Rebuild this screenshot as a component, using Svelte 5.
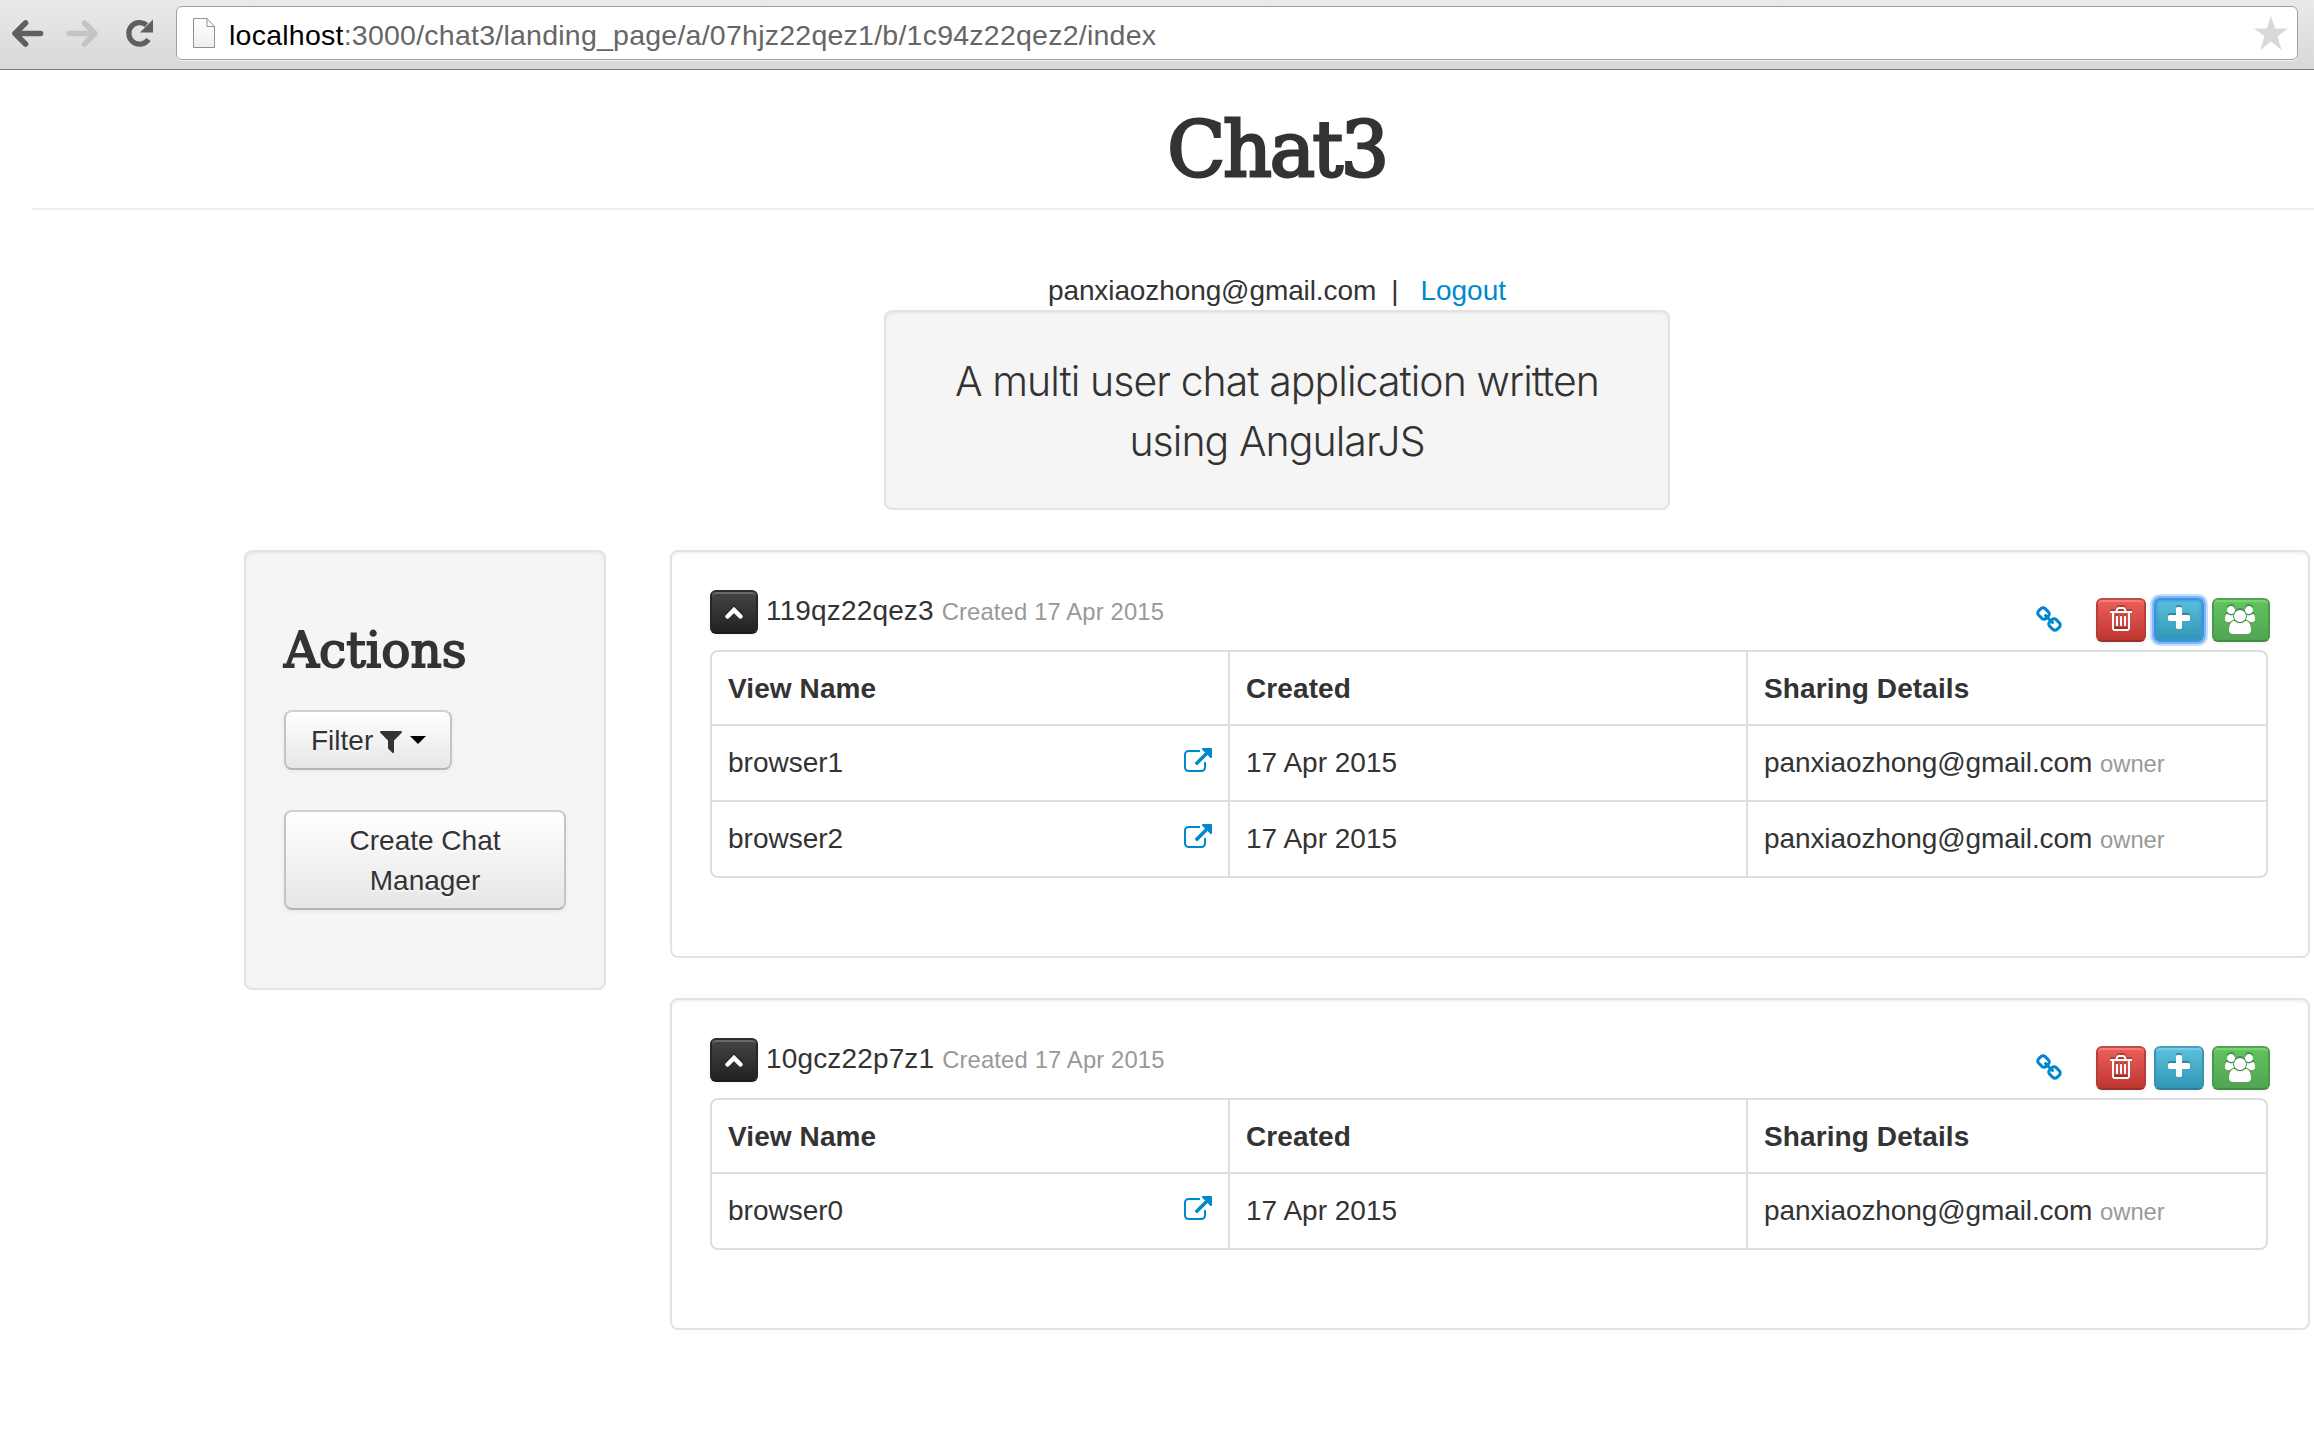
<script>
  const columns = ['View Name', 'Created', 'Sharing Details'];
  const email = 'panxiaozhong@gmail.com';
  const managers = [
    { id: '119qz22qez3', created: '17 Apr 2015', focused: true, views: ['browser1', 'browser2'] },
    { id: '10gcz22p7z1', created: '17 Apr 2015', focused: false, views: ['browser0'] },
  ];

  const icons = {
    filter:
      'M1595 295q17 41-14 70l-493 493v742q0 42-39 59-13 5-25 5-27 0-45-19l-256-256q-19-19-19-45v-486l-493-493q-31-29-14-70 17-39 59-39h1280q42 0 59 39z',
    external:
      'M1408 928v320q0 119-84.5 203.500t-203.500 84.500h-832q-119 0-203.500-84.500t-84.500-203.500v-832q0-119 84.500-203.500t203.500-84.500h704q14 0 23 9t9 23v64q0 14-9 23t-23 9h-704q-66 0-113 47t-47 113v832q0 66 47 113t113 47h832q66 0 113-47t47-113v-320q0-14 9-23t23-9h64q14 0 23 9t9 23zm384-864v512q0 26-19 45t-45 19-45-19l-176-176-652 652q-10 10-23 10t-23-10l-114-114q-10-10-10-23t10-23l652-652-176-176q-19-19-19-45t19-45 45-19h512q26 0 45 19t19 45z',
    link: 'M1520 1216q0-40-28-68l-208-208q-28-28-68-28-42 0-72 32 3 3 19 18.500t21.500 21.500 15 19 13 25.500 3.500 27.500q0 40-28 68t-68 28q-15 0-27.500-3.500t-25.500-13-19-15-21.500-21.500-18.500-19q-33 31-33 73 0 40 28 68l206 207q27 27 68 27 40 0 68-26l147-146q28-28 28-67zm-703-705q0-40-28-68l-206-207q-28-28-68-28-39 0-68 27l-147 146q-28 28-28 67 0 40 28 68l208 208q27 27 68 27 42 0 72-31-3-3-19-18.500t-21.500-21.500-15-19-13-25.500-3.500-27.500q0-40 28-68t68-28q15 0 27.500 3.500t25.500 13 19 15 21.500 21.500 18.500 19q33-31 33-73zm895 705q0 120-85 203l-147 146q-83 83-203 83-121 0-204-85l-206-207q-83-83-83-203 0-123 88-209l-88-88q-86 88-208 88-120 0-204-84l-208-208q-84-84-84-204t85-203l147-146q83-83 203-83 121 0 204 85l206 207q83 83 83 203 0 123-88 209l88 88q86-88 208-88 120 0 204 84l208 208q84 84 84 204z',
    trash:
      'M704 736v576q0 14-9 23t-23 9h-64q-14 0-23-9t-9-23v-576q0-14 9-23t23-9h64q14 0 23 9t9 23zm256 0v576q0 14-9 23t-23 9h-64q-14 0-23-9t-9-23v-576q0-14 9-23t23-9h64q14 0 23 9t9 23zm256 0v576q0 14-9 23t-23 9h-64q-14 0-23-9t-9-23v-576q0-14 9-23t23-9h64q14 0 23 9t9 23zm128 724v-948h-896v948q0 22 7 40.500t14.500 27 10.500 8.500h832q3 0 10.500-8.500t14.500-27 7-40.500zm-672-1076h448l-48-117q-7-9-17-11h-317q-10 2-17 11zm928 32v64q0 14-9 23t-23 9h-96v948q0 83-47 143.500t-113 60.500h-832q-66 0-113-58.500t-47-141.500v-952h-96q-14 0-23-9t-9-23v-64q0-14 9-23t23-9h309l70-167q15-37 54-63t79-26h320q40 0 79 26t54 63l70 167h309q14 0 23 9t9 23z',
    plus: 'M1600 736v192q0 40-28 68t-68 28h-416v416q0 40-28 68t-68 28h-192q-40 0-68-28t-28-68v-416h-416q-40 0-68-28t-28-68v-192q0-40 28-68t68-28h416v-416q0-40 28-68t68-28h192q40 0 68 28t28 68v416h416q40 0 68 28t28 68z',
    group:
      'M657 896q-162 5-265 128h-134q-82 0-138-40.500t-56-118.500q0-353 124-353 6 0 43.500 21t97.500 42.500 119 21.500q67 0 133-23-5 37-5 66 0 139 81 256zm1071 637q0 120-73 189.500t-194 69.500h-874q-121 0-194-69.500t-73-189.500q0-53 3.500-103.500t14-109 26.500-108.500 43-97.500 62-81 85.500-53.500 111.500-20q10 0 43 21.500t73 48 107 48 135 21.500 135-21.500 107-48 73-48 43-21.500q61 0 111.500 20t85.500 53.500 62 81 43 97.500 26.500 108.500 14 109 3.500 103.500zm-1024-1277q0 106-75 181t-181 75-181-75-75-181 75-181 181-75 181 75 75 181zm704 384q0 159-112.500 271.500t-271.500 112.500-271.500-112.500-112.500-271.500 112.500-271.500 271.500-112.500 271.500 112.500 112.500 271.500zm576 225q0 78-56 118.500t-138 40.500h-134q-103-123-265-128 81-117 81-256 0-29-5-66 66 23 133 23 59 0 119-21.500t97.500-42.500 43.500-21q124 0 124 353zm-128-609q0 106-75 181t-181 75-181-75-75-181 75-181 181-75 181 75 75 181z',
  };
</script>

{#snippet icon(name, width = 1792)}
  <svg class="icon {name}" viewBox="0 0 {width} 1792" aria-hidden="true"><path d={icons[name]} /></svg>
{/snippet}

<div class="window">
  <div class="toolbar">
    <svg class="nav" viewBox="0 0 176 69" aria-hidden="true">
      <g fill="none" stroke-linecap="round" stroke-linejoin="round">
        <path d="M40.500 33.500H16M25.500 23L15 33.500L25.500 44" stroke="#5f5f5f" stroke-width="5.600" />
        <path d="M69 33.500H94M84.500 23L95 33.500L84.500 44" stroke="#c4c4c4" stroke-width="5.600" />
        <path d="M148.500 39.500A10.800 10.800 0 1 1 146.500 25" stroke="#5f5f5f" stroke-width="5.200" stroke-linecap="butt" />
      </g>
      <path d="M153 19.500V32.500H140Z" fill="#5f5f5f" />
    </svg>
    <div class="omnibox">
      <svg class="doc" viewBox="0 0 24 32" aria-hidden="true">
        <defs>
          <linearGradient id="paper" x2="0" y2="1">
            <stop offset="0" stop-color="#fff" />
            <stop offset="1" stop-color="#eee" />
          </linearGradient>
        </defs>
        <path d="M1.500 1.500H15L22.500 9.500V30.500H1.500Z" fill="url(#paper)" stroke="#8f8f8f" />
        <path d="M15 1.500V9.500H22.500" fill="none" stroke="#8f8f8f" />
      </svg>
      <span class="url"><b>localhost</b>:3000/chat3/landing_page/a/07hjz22qez1/b/1c94z22qez2/index</span>
      <svg class="star" viewBox="0 0 34 34" aria-hidden="true">
        <path d="M17 0L21.200 12.500H34L23.600 20.300L27.500 34L17 25.500L6.500 34L10.400 20.300L0 12.500H12.800Z" />
      </svg>
    </div>
  </div>

  <header class="masthead">
    <h1>Chat3</h1>
    <hr />
    <div class="user"><span class="mail">{email}</span><span class="bar">|</span><a href="#logout">Logout</a></div>
    <div class="well lead">A multi user chat application written using AngularJS</div>
  </header>

  <div class="content">
    <aside class="well actions">
      <h3>Actions</h3>
      <button class="btn filter-btn">Filter {@render icon('filter')}<i class="caret"></i></button>
      <button class="btn create">Create Chat Manager</button>
    </aside>

    <main>
      {#each managers as manager}
        <section class="well manager">
          <div class="head">
            <button class="small dark" aria-label="Collapse">
              <svg class="chevron" viewBox="0 0 20 14" aria-hidden="true"><path d="M3.500 10.500L10 4L16.500 10.500" /></svg>
            </button>
            <div class="title">{manager.id} <small>Created {manager.created}</small></div>
            <div class="tools">
              <a class="share" href="#link" aria-label="Link">{@render icon('link')}</a>
              <button class="small red" aria-label="Delete">{@render icon('trash')}</button>
              <button class="small blue" class:focused={manager.focused} aria-label="Add">{@render icon('plus')}</button>
              <button class="small green" aria-label="Users">{@render icon('group', 2048)}</button>
            </div>
          </div>
          <div class="table">
            <div class="row header">
              {#each columns as column}
                <div class="cell">{column}</div>
              {/each}
            </div>
            {#each manager.views as view}
              <div class="row">
                <div class="cell name"><span>{view}</span><a href="#open" aria-label="Open">{@render icon('external')}</a></div>
                <div class="cell">{manager.created}</div>
                <div class="cell"><span class="mail">{email}</span> <small>owner</small></div>
              </div>
            {/each}
          </div>
        </section>
      {/each}
    </main>
  </div>
</div>

<style>
  :global(body) {
    margin: 0;
    overflow: hidden;
    background: #fff;
  }
  .window,
  .window :global(*) {
    box-sizing: border-box;
  }
  .window {
    width: 100%;
    height: 1442px;
    overflow: hidden;
    background: #fff;
    color: #333;
    font: 28px/42px 'Liberation Sans', Arial, sans-serif;
  }
  a {
    color: #08c;
    text-decoration: none;
  }
  small {
    font-size: 23.8px;
    color: #999;
  }
  button {
    font: inherit;
    color: inherit;
    margin: 0;
  }
  .icon {
    display: block;
    height: 28px;
    fill: currentColor;
  }

  .toolbar {
    display: flex;
    align-items: flex-start;
    height: 70px;
    padding-right: 16px;
    background: linear-gradient(#eaeaea, #d8d8d8);
    border-bottom: 1px solid #7c7c7c;
  }
  .nav {
    width: 176px;
    height: 69px;
    flex: none;
  }
  .omnibox {
    flex: 1;
    display: flex;
    align-items: center;
    height: 54px;
    margin-top: 6px;
    padding: 0 9px 0 15px;
    background: #fff;
    border: 1px solid #a0a0a0;
    border-radius: 6px;
    box-shadow: 0 1px 0 #f2f2f2;
  }
  .doc {
    width: 24px;
    height: 32px;
    margin-right: 13px;
  }
  .url {
    flex: 1;
    color: #666;
    white-space: nowrap;
    font-size: 28.5px;
    letter-spacing: 0.24px;
    padding-top: 3px;
  }
  .url b {
    font-weight: 400;
    color: #000;
  }
  .star {
    width: 34px;
    height: 34px;
    fill: #d9d9d9;
  }

  /* The header is centred on a column that runs past the right edge. */
  .masthead {
    width: 2490px;
    margin-left: 32px;
    padding-top: 40px;
    text-align: center;
  }
  h1,
  h3 {
    margin: 0;
    font-family: 'DejaVu Serif', serif;
    font-weight: 400;
    line-height: 80px;
  }
  h1 {
    font-size: 76px;
    letter-spacing: -2.4px;
    -webkit-text-stroke: 2.8px #333;
  }
  h3 {
    font-size: 48.5px;
    margin: 20px 0;
    -webkit-text-stroke: 1.8px #333;
  }
  hr {
    height: 2px;
    margin: 18px 0 60px;
    border: 0;
    background: #eee;
  }
  .user {
    display: flex;
    justify-content: center;
    height: 40px;
  }
  .mail {
    letter-spacing: -0.1px;
  }
  .bar {
    margin: 0 22px 0 15px;
  }
  .well {
    background: #f5f5f5;
    border: 2px solid #e3e3e3;
    border-radius: 8px;
    box-shadow: inset 0 2px 2px rgba(0, 0, 0, 0.05);
    padding: 38px;
  }
  .lead {
    width: 786px;
    height: 200px;
    padding-top: 39px;
    margin: 0 auto;
    font: 300 41px/60px Inter, 'Liberation Sans', sans-serif;
    letter-spacing: -0.95px;
  }

  .content {
    display: flex;
    align-items: flex-start;
    gap: 64px;
    padding: 40px 4px 0 244px;
  }
  .actions {
    width: 362px;
    height: 440px;
    flex: none;
    display: flex;
    flex-direction: column;
    align-items: flex-start;
  }
  .btn {
    border: 2px solid #ccc;
    border-color: #cfcfcf #c4c4c4 #b3b3b3;
    border-radius: 8px;
    background: linear-gradient(#fff, #e6e6e6);
    box-shadow: 0 2px 4px rgba(0, 0, 0, 0.05);
    text-shadow: 0 2px 2px rgba(255, 255, 255, 0.75);
    text-align: center;
    line-height: 40px;
  }
  .filter-btn {
    display: flex;
    align-items: center;
    width: 168px;
    height: 60px;
    padding: 2px 23px 0 25px;
    margin-bottom: 40px;
  }
  .filter {
    margin: -1px 5px 0 4px;
  }
  .caret {
    margin-top: -2px;
    border: 8px solid transparent;
    border-top-color: #000;
    border-bottom: 0;
  }
  .create {
    width: 282px;
    height: 100px;
    padding: 2px 50px 0;
  }

  main {
    flex: 1;
    display: flex;
    flex-direction: column;
    gap: 40px;
  }
  .manager {
    background: #fff;
    padding-bottom: 78px;
  }
  .head {
    display: flex;
    align-items: flex-start;
    height: 60px;
  }
  .title {
    flex: 1;
    margin-left: 8px;
    letter-spacing: 0.15px;
  }
  .small {
    display: flex;
    align-items: center;
    justify-content: center;
    width: 50px;
    height: 44px;
    padding: 0 0 2px;
    color: #fff;
    border: 2px solid;
    border-radius: 6px;
    box-shadow:
      inset 0 2px 0 rgba(255, 255, 255, 0.2),
      0 2px 4px rgba(0, 0, 0, 0.05);
  }
  .small svg {
    flex: none;
    filter: drop-shadow(0 -2px 0 rgba(0, 0, 0, 0.25));
  }
  .dark {
    width: 48px;
    padding: 2px 0 0;
    background: linear-gradient(#444, #222);
    border-color: #2c2c2c #262626 #1c1c1c;
  }
  .chevron {
    width: 20px;
    height: 14px;
    fill: none;
    stroke: #fff;
    stroke-width: 4.5;
    stroke-linecap: round;
    stroke-linejoin: miter;
  }
  .red {
    background: linear-gradient(#ee5f5b, #bd362f);
    border-color: #c04a45 #b43f3a #9c2f2a;
  }
  .blue {
    background: linear-gradient(#5bc0de, #2f96b4);
    border-color: #48a1bb #3c91ad #2c7f98;
    margin: 0 8px;
  }
  .red svg,
  .blue svg {
    margin-right: 1px;
  }
  .focused {
    border-color: #3d92dc;
    box-shadow:
      inset 0 0 3px 1px #3f97db,
      0 0 0 2px #7fb9fa,
      0 0 1px 4px #c3ddfd;
  }
  .green {
    width: 58px;
    padding-bottom: 0;
    background: linear-gradient(#62c462, #51a351);
    border-color: #51a351 #4b994b #448944;
  }
  .green svg {
    margin-right: 2px;
  }
  .tools {
    display: flex;
    align-items: center;
    margin-top: 8px;
  }
  .share {
    margin: 0 33px 0 0;
  }

  .table {
    width: 1558px;
    border: 2px solid #ddd;
    border-radius: 8px;
  }
  .row {
    display: grid;
    grid-template-columns: 516px 518px 1fr;
    height: 76px;
    border-top: 2px solid #ddd;
  }
  .header {
    height: 72px;
    border-top: 0;
    font-weight: 700;
    letter-spacing: 0.1px;
  }
  .cell {
    padding: 16px 16px 0;
    white-space: nowrap;
  }
  .cell + .cell {
    border-left: 2px solid #ddd;
  }
  .name {
    display: flex;
    justify-content: space-between;
  }
  .name :global(.external) {
    margin-top: 6px;
  }
</style>
